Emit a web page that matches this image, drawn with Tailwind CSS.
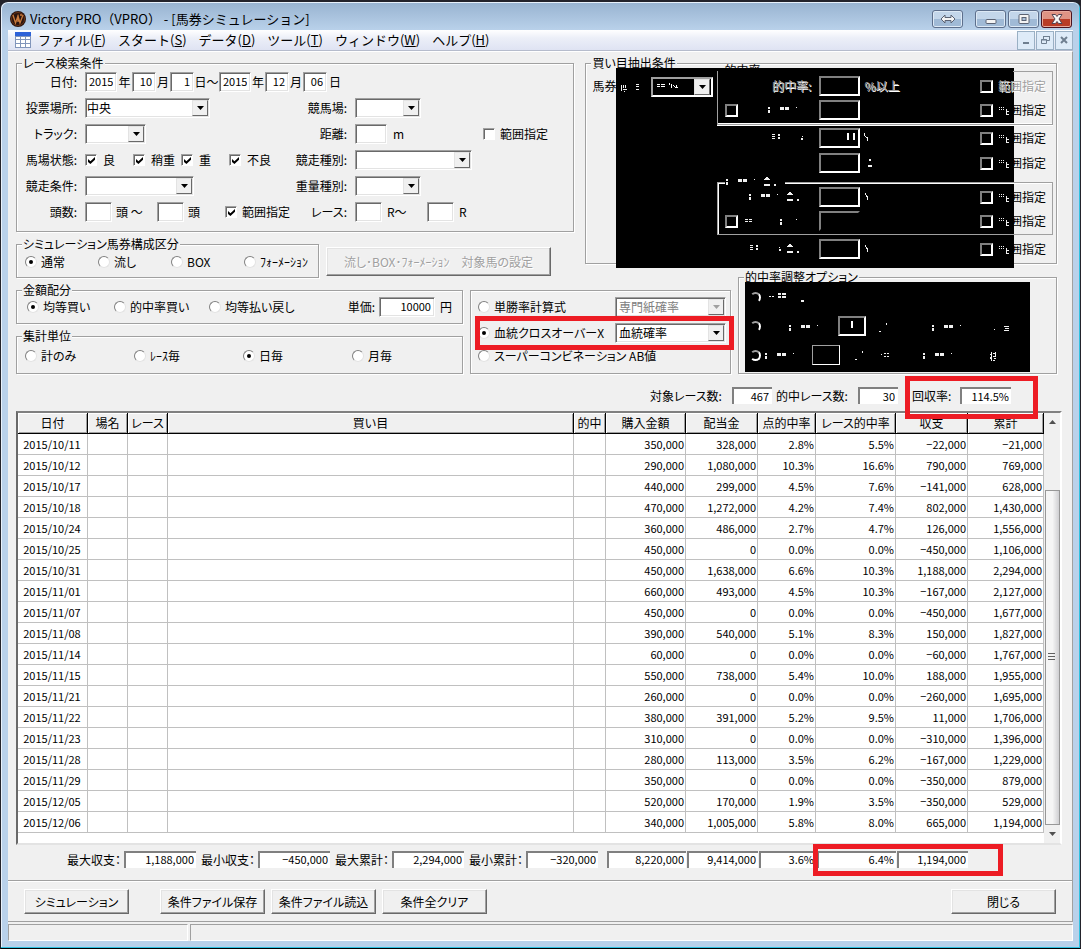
<!DOCTYPE html>
<html lang="ja">
  <head>
    <meta charset="UTF-8" />
    <meta name="viewport" content="width=device-width, initial-scale=1.0" />
    <script src="https://cdn.jsdelivr.net/npm/@tailwindcss/browser@4"></script>
    <title>Victory PRO（VPRO） - [馬券シミュレーション]</title>
  </head>
  <body
    class="bg-[#23232b] font-['Noto_Sans_CJK_JP',sans-serif] text-[12px] leading-3 text-black [font-feature-settings:'palt']"
  >
    <div
      class="flex min-h-screen flex-col rounded-t-lg border border-t-2 border-[#23232b] border-b-black bg-[#b9d1ea] px-[7px] pb-[7px] shadow-[inset_-1px_-1px_0_#2fc1e0,inset_1px_1px_0_#e8f1fb]"
    >
      <!-- title bar -->
      <header
        class="-mx-[6px] mt-px flex h-[27px] items-center rounded-t-md bg-linear-to-b from-[#99b4d1] to-[#b9d1ea] pr-[7px] pl-2"
      >
        <svg class="mt-1 size-4" viewBox="0 0 16 16">
          <circle cx="8" cy="8" r="8" fill="#2a1510" />
          <circle cx="8" cy="8" r="6.5" fill="none" stroke="#6b3416" />
          <path
            d="M3 4l2.500 8L8 5l2 7 3-8M8 4v7M10 4h2"
            fill="none"
            stroke="#c97a3c"
            stroke-width="1.300"
          />
        </svg>
        <h1 class="mt-1 ml-1 flex-1 text-[13px] leading-4 whitespace-pre [font-feature-settings:normal]">Victory PRO（VPRO） - [馬券シミュレーション]</h1>
        <div class="mt-1 flex gap-[2px]">
          <button
            aria-label="切替"
            class="mr-[10px] flex h-[18px] w-[31px] items-center justify-center rounded-[3px] border border-[#5d6f8c] bg-linear-to-b from-[#c3d6ea] from-50% to-[#a0bad6] to-50% shadow-[inset_0_0_0_1px_#dde9f5]"
          >
            <svg class="h-[10px] w-4" viewBox="0 0 16 10">
              <path
                d="M1 5l4-4v2.500h6V1l4 4-4 4V6.500H5V9z"
                fill="#f4f4f4"
                stroke="#5a6273"
              />
            </svg>
          </button>
          <button
            aria-label="最小化"
            class="flex h-[18px] w-[31px] items-center justify-center rounded-[3px] border border-[#5d6f8c] bg-linear-to-b from-[#c3d6ea] from-50% to-[#a0bad6] to-50% shadow-[inset_0_0_0_1px_#dde9f5]"
          >
            <svg class="h-[10px] w-3" viewBox="0 0 12 10">
              <rect x="1" y="5.500" width="10" height="4" rx="1" fill="#f4f4f4" stroke="#5a6273" />
            </svg>
          </button>
          <button
            aria-label="最大化"
            class="flex h-[18px] w-[31px] items-center justify-center rounded-[3px] border border-[#5d6f8c] bg-linear-to-b from-[#c3d6ea] from-50% to-[#a0bad6] to-50% shadow-[inset_0_0_0_1px_#dde9f5]"
          >
            <svg class="h-[10px] w-3" viewBox="0 0 12 10">
              <rect x="1" y=".5" width="10" height="9" rx="1" fill="#f4f4f4" stroke="#5a6273" />
              <rect x="4" y="3.500" width="4" height="3" fill="#a9c0da" stroke="#5a6273" />
            </svg>
          </button>
          <button
            aria-label="閉じる"
            class="flex h-[18px] w-[31px] items-center justify-center rounded-[3px] border border-[#4b1320] bg-linear-to-b from-[#df9384] from-50% to-[#b93c26] to-50% shadow-[inset_0_0_0_1px_#e8a99c]"
          >
            <svg class="h-[10px] w-3" viewBox="0 0 12 10">
              <path
                d="M1 .5h3.500l1.500 2 1.500-2H11L8 5l3 4.500H7.500L6 7.500l-1.500 2H1L4 5z"
                fill="#f6f6f6"
                stroke="#544552"
              />
            </svg>
          </button>
        </div>
      </header>

      <!-- menu bar -->
      <nav
        class="flex h-[21px] items-center border-b border-[#b6bccc] bg-linear-to-b from-white via-[#eceff8] via-40% to-[#dfe3f3] pl-[7px] text-[13px] leading-4 [font-feature-settings:normal]"
      >
        <svg class="mr-[7px] size-4" viewBox="0 0 16 16" shape-rendering="crispEdges">
          <rect width="16" height="16" fill="#8195bb" />
          <rect width="16" height="4" fill="#2d62d8" />
          <path
            d="M1 5h4v2H1zM6 5h4v2H6zM11 5h4v2h-4zM1 8h4v3H1zM6 8h4v3H6zM11 8h4v3h-4zM1 12h4v3H1zM6 12h4v3H6zM11 12h4v3h-4z"
            fill="#fff"
          />
        </svg>
        <div class="flex flex-1 gap-3">
          <button>ファイル(<u>F</u>)</button>
          <button>スタート(<u>S</u>)</button>
          <button>データ(<u>D</u>)</button>
          <button>ツール(<u>T</u>)</button>
          <button>ウィンドウ(<u>W</u>)</button>
          <button>ヘルプ(<u>H</u>)</button>
        </div>
        <div class="flex gap-px">
          <button
            aria-label="子ウィンドウを最小化"
            class="flex h-[19px] w-[18px] items-center justify-center border border-[#9ab0c4] bg-[#deebf8]"
          >
            <svg class="size-[10px]" viewBox="0 0 10 10"><path d="M2 7h6v2H2z" fill="#6f7f90" /></svg>
          </button>
          <button
            aria-label="子ウィンドウを元に戻す"
            class="flex h-[19px] w-[18px] items-center justify-center border border-[#9ab0c4] bg-[#deebf8]"
          >
            <svg class="size-[10px]" viewBox="0 0 10 10" fill="none" stroke="#6f7f90">
              <path d="M3.500 4V1.500h6v4H7M3 1.500h7" />
              <path d="M1.500 4.500h5v4h-5zM1 5h6" />
            </svg>
          </button>
          <button
            aria-label="子ウィンドウを閉じる"
            class="flex h-[19px] w-[18px] items-center justify-center border border-[#9ab0c4] bg-[#deebf8]"
          >
            <svg class="size-[10px]" viewBox="0 0 10 10">
              <path d="M2 2l6 6M8 2L2 8" stroke="#6f7f90" stroke-width="2" />
            </svg>
          </button>
        </div>
      </nav>

      <main
        class="flex flex-1 flex-col border-t border-r border-t-white border-r-[#a0a0a0] bg-[#f0f0f0] pt-[5px] pl-2"
      >
        <!-- search conditions / extraction conditions -->
        <div class="mr-[15px] grid grid-cols-[559fr_472fr] items-start gap-x-[11px]">
          <div>
            <fieldset
              class="border border-[#a0a0a0] shadow-[1px_1px_0_#fff,inset_1px_1px_0_#fff]"
            >
              <legend class="ml-[5px] bg-[#f0f0f0] px-px">レース検索条件</legend>
              <div class="grid grid-cols-[270px_1fr] gap-y-[6px] pt-[3px] pb-[9px]">
                <div class="col-span-2 flex h-5 items-center">
                  <span class="mr-2 w-[60px] text-right">日付:</span>
                  <input aria-label="開始年" value="2015" class="h-5 w-8 border border-[#a0a0a0] border-r-white border-b-white bg-white px-[3px] pb-[2px] text-right text-[11px] shadow-[inset_1px_1px_0_#696969,inset_-1px_-1px_0_#e3e3e3]" />
                  <span class="w-[15px] text-center">年</span>
                  <input aria-label="開始月" value="10" class="h-5 w-6 border border-[#a0a0a0] border-r-white border-b-white bg-white px-[3px] pb-[2px] text-right text-[11px] shadow-[inset_1px_1px_0_#696969,inset_-1px_-1px_0_#e3e3e3]" />
                  <span class="w-[14px] text-center">月</span>
                  <input aria-label="開始日" value="1" class="h-5 w-6 border border-[#a0a0a0] border-r-white border-b-white bg-white px-[3px] pb-[2px] text-right text-[11px] shadow-[inset_1px_1px_0_#696969,inset_-1px_-1px_0_#e3e3e3]" />
                  <span class="w-[25px] text-center whitespace-nowrap">日〜</span>
                  <input aria-label="終了年" value="2015" class="h-5 w-8 border border-[#a0a0a0] border-r-white border-b-white bg-white px-[3px] pb-[2px] text-right text-[11px] shadow-[inset_1px_1px_0_#696969,inset_-1px_-1px_0_#e3e3e3]" />
                  <span class="w-[14px] text-center">年</span>
                  <input aria-label="終了月" value="12" class="h-5 w-6 border border-[#a0a0a0] border-r-white border-b-white bg-white px-[3px] pb-[2px] text-right text-[11px] shadow-[inset_1px_1px_0_#696969,inset_-1px_-1px_0_#e3e3e3]" />
                  <span class="w-[14px] text-center">月</span>
                  <input aria-label="終了日" value="06" class="h-5 w-6 border border-[#a0a0a0] border-r-white border-b-white bg-white px-[3px] pb-[2px] text-right text-[11px] shadow-[inset_1px_1px_0_#696969,inset_-1px_-1px_0_#e3e3e3]" />
                  <span class="ml-[2px]">日</span>
                </div>

                <div class="flex h-5 items-center">
                  <label for="place" class="mr-2 w-[60px] text-right">投票場所:</label>
                  <div class="relative h-5 w-[125px]">
                    <select id="place" class="size-full appearance-none border border-[#a0a0a0] border-r-white border-b-white bg-white pl-px shadow-[inset_1px_1px_0_#696969,inset_-1px_-1px_0_#e3e3e3]">
                      <option>中央</option>
                      <option>地方</option>
                    </select>
                    <span class="pointer-events-none absolute inset-y-[2px] right-[2px] flex w-4 items-center justify-center border border-[#e3e3e3] border-r-[#696969] border-b-[#696969] bg-[#f0f0f0]">
                      <svg class="h-1 w-[7px]" viewBox="0 0 7 4"><path d="M0 0h7L3.500 4z" /></svg>
                    </span>
                  </div>
                </div>
                <div class="flex h-5 items-center">
                  <label for="course" class="mr-2 w-[60px] text-right">競馬場:</label>
                  <div class="relative h-5 w-[66px]">
                    <select id="course" class="size-full appearance-none border border-[#a0a0a0] border-r-white border-b-white bg-white pl-px shadow-[inset_1px_1px_0_#696969,inset_-1px_-1px_0_#e3e3e3]">
                      <option></option>
                    </select>
                    <span class="pointer-events-none absolute inset-y-[2px] right-[2px] flex w-4 items-center justify-center border border-[#e3e3e3] border-r-[#696969] border-b-[#696969] bg-[#f0f0f0]">
                      <svg class="h-1 w-[7px]" viewBox="0 0 7 4"><path d="M0 0h7L3.500 4z" /></svg>
                    </span>
                  </div>
                </div>

                <div class="flex h-5 items-center">
                  <label for="track" class="mr-2 w-[60px] text-right">トラック:</label>
                  <div class="relative h-5 w-[61px]">
                    <select id="track" class="size-full appearance-none border border-[#a0a0a0] border-r-white border-b-white bg-white pl-px shadow-[inset_1px_1px_0_#696969,inset_-1px_-1px_0_#e3e3e3]">
                      <option></option>
                    </select>
                    <span class="pointer-events-none absolute inset-y-[2px] right-[2px] flex w-4 items-center justify-center border border-[#e3e3e3] border-r-[#696969] border-b-[#696969] bg-[#f0f0f0]">
                      <svg class="h-1 w-[7px]" viewBox="0 0 7 4"><path d="M0 0h7L3.500 4z" /></svg>
                    </span>
                  </div>
                </div>
                <div class="flex h-5 items-center">
                  <label for="distance" class="mr-2 w-[60px] text-right">距離:</label>
                  <input id="distance" class="h-5 w-8 border border-[#a0a0a0] border-r-white border-b-white bg-white px-[3px] text-right text-[11px] shadow-[inset_1px_1px_0_#696969,inset_-1px_-1px_0_#e3e3e3]" />
                  <span class="ml-[6px] w-[90px]">m</span>
                  <label class="flex items-center gap-[5px]">
                    <input type="checkbox" class="size-3 appearance-none border border-[#a0a0a0] border-r-white border-b-white bg-white shadow-[inset_1px_1px_0_#696969]" />
                    範囲指定
                  </label>
                </div>

                <div class="flex h-5 items-center">
                  <span class="mr-2 w-[60px] text-right">馬場状態:</span>
                  <label class="flex w-12 items-center gap-[6px]">
                    <input type="checkbox" checked class="size-3 appearance-none border border-[#a0a0a0] border-r-white border-b-white bg-white p-[2px] shadow-[inset_1px_1px_0_#696969] checked:before:block checked:before:size-[7px] checked:before:bg-black checked:before:[clip-path:polygon(0_30%,35%_60%,100%_0,100%_40%,35%_100%,0_70%)]" />良
                  </label>
                  <label class="flex w-12 items-center gap-[6px]">
                    <input type="checkbox" checked class="size-3 appearance-none border border-[#a0a0a0] border-r-white border-b-white bg-white p-[2px] shadow-[inset_1px_1px_0_#696969] checked:before:block checked:before:size-[7px] checked:before:bg-black checked:before:[clip-path:polygon(0_30%,35%_60%,100%_0,100%_40%,35%_100%,0_70%)]" />稍重
                  </label>
                  <label class="flex w-12 items-center gap-[6px]">
                    <input type="checkbox" checked class="size-3 appearance-none border border-[#a0a0a0] border-r-white border-b-white bg-white p-[2px] shadow-[inset_1px_1px_0_#696969] checked:before:block checked:before:size-[7px] checked:before:bg-black checked:before:[clip-path:polygon(0_30%,35%_60%,100%_0,100%_40%,35%_100%,0_70%)]" />重
                  </label>
                  <label class="flex items-center gap-[6px]">
                    <input type="checkbox" checked class="size-3 appearance-none border border-[#a0a0a0] border-r-white border-b-white bg-white p-[2px] shadow-[inset_1px_1px_0_#696969] checked:before:block checked:before:size-[7px] checked:before:bg-black checked:before:[clip-path:polygon(0_30%,35%_60%,100%_0,100%_40%,35%_100%,0_70%)]" />不良
                  </label>
                </div>
                <div class="flex h-5 items-center">
                  <label for="kind" class="mr-2 w-[60px] text-right">競走種別:</label>
                  <div class="relative h-5 w-[117px]">
                    <select id="kind" class="size-full appearance-none border border-[#a0a0a0] border-r-white border-b-white bg-white pl-px shadow-[inset_1px_1px_0_#696969,inset_-1px_-1px_0_#e3e3e3]">
                      <option></option>
                    </select>
                    <span class="pointer-events-none absolute inset-y-[2px] right-[2px] flex w-4 items-center justify-center border border-[#e3e3e3] border-r-[#696969] border-b-[#696969] bg-[#f0f0f0]">
                      <svg class="h-1 w-[7px]" viewBox="0 0 7 4"><path d="M0 0h7L3.500 4z" /></svg>
                    </span>
                  </div>
                </div>

                <div class="flex h-5 items-center">
                  <label for="cond" class="mr-2 w-[60px] text-right">競走条件:</label>
                  <div class="relative h-5 w-[109px]">
                    <select id="cond" class="size-full appearance-none border border-[#a0a0a0] border-r-white border-b-white bg-white pl-px shadow-[inset_1px_1px_0_#696969,inset_-1px_-1px_0_#e3e3e3]">
                      <option></option>
                    </select>
                    <span class="pointer-events-none absolute inset-y-[2px] right-[2px] flex w-4 items-center justify-center border border-[#e3e3e3] border-r-[#696969] border-b-[#696969] bg-[#f0f0f0]">
                      <svg class="h-1 w-[7px]" viewBox="0 0 7 4"><path d="M0 0h7L3.500 4z" /></svg>
                    </span>
                  </div>
                </div>
                <div class="flex h-5 items-center">
                  <label for="weight" class="mr-2 w-[60px] text-right">重量種別:</label>
                  <div class="relative h-5 w-[66px]">
                    <select id="weight" class="size-full appearance-none border border-[#a0a0a0] border-r-white border-b-white bg-white pl-px shadow-[inset_1px_1px_0_#696969,inset_-1px_-1px_0_#e3e3e3]">
                      <option></option>
                    </select>
                    <span class="pointer-events-none absolute inset-y-[2px] right-[2px] flex w-4 items-center justify-center border border-[#e3e3e3] border-r-[#696969] border-b-[#696969] bg-[#f0f0f0]">
                      <svg class="h-1 w-[7px]" viewBox="0 0 7 4"><path d="M0 0h7L3.500 4z" /></svg>
                    </span>
                  </div>
                </div>

                <div class="flex h-5 items-center *:shrink-0">
                  <label for="headFrom" class="mr-2 w-[60px] text-right">頭数:</label>
                  <input id="headFrom" class="h-5 w-[27px] border border-[#a0a0a0] border-r-white border-b-white bg-white px-[3px] text-right text-[11px] shadow-[inset_1px_1px_0_#696969,inset_-1px_-1px_0_#e3e3e3]" />
                  <span class="w-[45px] pl-1">頭 〜</span>
                  <input aria-label="頭数上限" class="h-5 w-[27px] border border-[#a0a0a0] border-r-white border-b-white bg-white px-[3px] text-right text-[11px] shadow-[inset_1px_1px_0_#696969,inset_-1px_-1px_0_#e3e3e3]" />
                  <span class="w-[41px] pl-1">頭</span>
                  <label class="flex items-center gap-[5px] whitespace-nowrap">
                    <input type="checkbox" checked class="size-3 appearance-none border border-[#a0a0a0] border-r-white border-b-white bg-white p-[2px] shadow-[inset_1px_1px_0_#696969] checked:before:block checked:before:size-[7px] checked:before:bg-black checked:before:[clip-path:polygon(0_30%,35%_60%,100%_0,100%_40%,35%_100%,0_70%)]" />範囲指定
                  </label>
                </div>
                <div class="flex h-5 items-center">
                  <label for="raceFrom" class="mr-2 w-[60px] text-right">レース:</label>
                  <input id="raceFrom" class="h-5 w-[27px] border border-[#a0a0a0] border-r-white border-b-white bg-white px-[3px] text-right text-[11px] shadow-[inset_1px_1px_0_#696969,inset_-1px_-1px_0_#e3e3e3]" />
                  <span class="w-[45px] pl-[5px]">R〜</span>
                  <input aria-label="レース上限" class="h-5 w-[27px] border border-[#a0a0a0] border-r-white border-b-white bg-white px-[3px] text-right text-[11px] shadow-[inset_1px_1px_0_#696969,inset_-1px_-1px_0_#e3e3e3]" />
                  <span class="pl-[5px]">R</span>
                </div>
              </div>
            </fieldset>

            <div class="mt-[6px] flex">
              <fieldset
                class="w-[303px] border border-[#a0a0a0] shadow-[1px_1px_0_#fff,inset_1px_1px_0_#fff]"
              >
                <legend class="ml-[5px] bg-[#f0f0f0] px-px">シミュレーション馬券構成区分</legend>
                <div class="flex h-[27px] items-center pb-1 pl-2">
                  <label class="flex w-[73px] items-center gap-1 whitespace-nowrap">
                    <input type="radio" name="form" checked class="size-3 appearance-none rounded-full border border-[#808080] border-r-[#e3e3e3] border-b-[#e3e3e3] bg-white p-[3px] checked:before:block checked:before:size-1 checked:before:rounded-full checked:before:bg-black" />通常
                  </label>
                  <label class="flex w-[73px] items-center gap-1 whitespace-nowrap">
                    <input type="radio" name="form" class="size-3 appearance-none rounded-full border border-[#808080] border-r-[#e3e3e3] border-b-[#e3e3e3] bg-white p-[3px] checked:before:block checked:before:size-1 checked:before:rounded-full checked:before:bg-black" />流し
                  </label>
                  <label class="flex w-[73px] items-center gap-1 whitespace-nowrap">
                    <input type="radio" name="form" class="size-3 appearance-none rounded-full border border-[#808080] border-r-[#e3e3e3] border-b-[#e3e3e3] bg-white p-[3px] checked:before:block checked:before:size-1 checked:before:rounded-full checked:before:bg-black" />BOX
                  </label>
                  <label class="flex items-center gap-1 whitespace-nowrap [font-feature-settings:normal]">
                    <input type="radio" name="form" class="size-3 appearance-none rounded-full border border-[#808080] border-r-[#e3e3e3] border-b-[#e3e3e3] bg-white p-[3px] checked:before:block checked:before:size-1 checked:before:rounded-full checked:before:bg-black" />ﾌｫｰﾒｰｼｮﾝ
                  </label>
                </div>
              </fieldset>
              <button
                disabled
                class="mt-[9px] ml-[7px] h-[29px] w-[225px] border border-white border-r-[#696969] border-b-[#696969] bg-[#f0f0f0] whitespace-nowrap text-[#a0a0a0] shadow-[inset_-1px_-1px_0_#a0a0a0,inset_1px_1px_0_#e3e3e3] text-shadow-[1px_1px_0_#fff]"
              >
                流し･BOX･ﾌｫｰﾒｰｼｮﾝ　対象馬の設定
              </button>
            </div>
          </div>

          <fieldset
            class="border border-[#a0a0a0] shadow-[1px_1px_0_#fff,inset_1px_1px_0_#fff]"
          >
            <legend class="ml-[5px] bg-[#f0f0f0] px-px">買い目抽出条件</legend>
            <div class="relative">
              <span class="absolute -top-[5px] left-[138px]">的中率</span>
              <div class="absolute -top-px right-[42px] -bottom-[5px] left-[30px] bg-black"></div>
              <div class="relative flex items-start pr-[3px] pb-1">
                <span class="mt-[11px] ml-[6px] w-6 whitespace-nowrap">馬券</span>
                <svg class="mt-2 h-5 w-[35px]" viewBox="0 0 35 20" fill="#f0f0f0" shape-rendering="crispEdges">
                  <path d="M5 8h1v6h-1zM7 8h1v3h-1zM9 8h1v3h-1zM7 12h4v1h-4zM8 14h1v1h-1zM20 7h3v1h-3zM20 9h3v1h-3zM20 12h3v1h-3z" />
                </svg>
                <div class="relative mt-2 h-5 w-[62px]">
                  <select aria-label="馬券種" class="size-full appearance-none border-2 border-[#a0a0a0] border-r-white border-b-white bg-black">
                    <option></option>
                  </select>
                  <svg class="pointer-events-none absolute top-[6px] left-[6px] h-[6px] w-6" viewBox="0 0 24 6" fill="#fff" shape-rendering="crispEdges">
                    <path d="M0 1h3v1H0zM4 1h4v1H4zM0 3h3v1H0zM4 3h4v1H4zM12 0h1v2h-1zM14 1h1v4h-1zM16 2h1v1h-1zM17 3h1v1h-1zM18 4h1v1h-1zM19 2h1v3h-1zM20 4h1v1h-1z" />
                  </svg>
                  <span class="pointer-events-none absolute inset-y-[2px] right-[3px] flex w-4 items-center justify-center border border-[#e3e3e3] border-r-[#696969] border-b-[#696969] bg-[#f0f0f0]">
                    <svg class="h-1 w-[7px]" viewBox="0 0 7 4"><path d="M0 0h7L3.500 4z" /></svg>
                  </span>
                </div>

                <div class="mt-[2px] ml-1 flex-1">
                  <div class="relative border border-t-0 border-[#a0a0a0] pt-[5px] pb-1 shadow-[0_1px_0_#fff,inset_0_-1px_0_#fff]">
                    <div class="absolute top-0 right-0 h-px w-[39px] bg-[#a0a0a0]"></div>
                    <div class="flex h-5 items-center">
                      <span class="w-[101px] pr-2 text-right text-[#a0a0a0] text-shadow-[1px_1px_0_#fff]">的中率:</span>
                      <input aria-label="的中率" class="h-5 w-[41px] border-2 border-[#808080] border-r-white border-b-white bg-black" />
                      <span class="flex-1 pl-1 text-[#a0a0a0] text-shadow-[1px_1px_0_#fff]">%以上</span>
                      <label class="mr-[6px] flex items-center gap-[5px] text-[#a0a0a0] text-shadow-[1px_1px_0_#fff]">
                        <input type="checkbox" disabled class="size-[13px] appearance-none border-2 border-[#808080] border-r-white border-b-white bg-black" />範囲指定
                      </label>
                    </div>
                    <div class="mt-1 flex h-5 items-center">
                      <input type="checkbox" aria-label="条件1" class="ml-[7px] size-[13px] appearance-none border-2 border-[#808080] border-r-white border-b-white bg-black" />
                      <svg class="h-5 w-[81px]" viewBox="0 0 81 20" fill="#f0f0f0" shape-rendering="crispEdges">
                        <path d="M30 7h2v2h-2zM30 10h2v3h-2zM42 7h4v3h-4zM47 7h4v3h-4zM58 7h1v1h-1z" />
                      </svg>
                      <input aria-label="値1" class="h-5 w-[41px] border-2 border-[#808080] border-r-white border-b-white bg-black" />
                      <span class="flex-1"></span>
                      <label class="relative mr-[6px] flex items-center gap-[5px]">
                        <input type="checkbox" class="size-[13px] appearance-none border-2 border-[#808080] border-r-white border-b-white bg-black" />範囲指定
                        <svg class="absolute left-[19px] h-[9px] w-[10px]" viewBox="0 0 10 9" fill="#f0f0f0" shape-rendering="crispEdges">
                          <path d="M0 1h1v1H0zM2 1h1v1H2zM4 1h1v1H4zM0 3h1v1H0zM2 3h1v1H2zM4 3h1v1H4zM7 3h1v6H7zM8 5h2v1H8zM8 8h2v1H8z" />
                        </svg>
                      </label>
                    </div>
                  </div>

                  <div class="mt-[3px] flex h-5 items-center pr-px pl-px">
                    <svg class="h-5 w-[101px]" viewBox="0 0 101 20" fill="#f0f0f0" shape-rendering="crispEdges">
                      <path d="M54 6h3v1h-3zM54 8h3v1h-3zM54 10h3v1h-3zM60 6h2v2h-2zM60 9h2v2h-2zM84 8h1v1h-1zM83 10h2v2h-2z" />
                    </svg>
                    <div class="relative h-5 w-[41px]">
                      <input aria-label="値2" class="size-full border-2 border-[#808080] border-r-white border-b-white bg-black" />
                      <svg class="pointer-events-none absolute top-[5px] right-[5px] h-[7px] w-2" viewBox="0 0 8 7" fill="#fff" shape-rendering="crispEdges"><path d="M0 0h2v7H0zM6 0h2v7H6z" /></svg>
                    </div>
                    <svg class="h-5 w-3" viewBox="0 0 12 20" fill="#f0f0f0" shape-rendering="crispEdges"><path d="M4 5h1v3H4zM5 8h1v1H5zM6 9h1v1H6zM7 9h1v4H7z" /></svg>
                    <span class="flex-1"></span>
                    <label class="relative mr-[6px] flex items-center gap-[5px]">
                      <input type="checkbox" class="size-[13px] appearance-none border-2 border-[#808080] border-r-white border-b-white bg-black" />範囲指定
                      <svg class="absolute left-[19px] h-[9px] w-[10px]" viewBox="0 0 10 9" fill="#f0f0f0" shape-rendering="crispEdges">
                        <path d="M0 1h1v1H0zM2 1h1v1H2zM4 1h1v1H4zM0 3h1v1H0zM2 3h1v1H2zM4 3h1v1H4zM7 3h1v6H7zM8 5h2v1H8zM8 8h2v1H8z" />
                      </svg>
                    </label>
                  </div>
                  <div class="mt-[5px] flex h-5 items-center pr-px pl-[102px]">
                    <input aria-label="値3" class="h-5 w-[41px] border-2 border-[#808080] border-r-white border-b-white bg-black" />
                    <svg class="h-5 w-[14px]" viewBox="0 0 14 20" fill="#f0f0f0" shape-rendering="crispEdges"><path d="M9 6h2v2H9zM8 12h4v2H8z" /></svg>
                    <span class="flex-1"></span>
                    <label class="relative mr-[6px] flex items-center gap-[5px]">
                      <input type="checkbox" class="size-[13px] appearance-none border-2 border-[#808080] border-r-white border-b-white bg-black" />範囲指定
                      <svg class="absolute left-[19px] h-[9px] w-[10px]" viewBox="0 0 10 9" fill="#f0f0f0" shape-rendering="crispEdges">
                        <path d="M0 1h1v1H0zM2 1h1v1H2zM4 1h1v1H4zM0 3h1v1H0zM2 3h1v1H2zM4 3h1v1H4zM7 3h1v6H7zM8 5h2v1H8zM8 8h2v1H8z" />
                      </svg>
                    </label>
                  </div>

                  <fieldset class="mt-[3px] border border-[#a0a0a0] pb-[3px] shadow-[inset_1px_1px_0_#fff]">
                    <legend class="ml-[7px] bg-black">
                      <svg class="h-3 w-[60px]" viewBox="0 0 60 12" fill="#f0f0f0" shape-rendering="crispEdges">
                        <path d="M1 3h2v2H1zM1 6h2v3H1zM13 3h4v3h-4zM18 3h4v3h-4zM29 3h1v1h-1zM41 1h2v1h-2zM40 2h4v1h-4zM39 3h6v1h-6zM39 8h6v2h-6zM49 8h2v2h-2z" />
                      </svg>
                    </legend>
                    <div class="-mt-px flex h-5 items-center">
                      <svg class="h-5 w-[101px]" viewBox="0 0 101 20" fill="#f0f0f0" shape-rendering="crispEdges">
                        <path d="M31 7h2v2h-2zM31 10h2v3h-2zM43 7h4v3h-4zM48 7h4v3h-4zM59 7h1v1h-1zM71 5h2v1h-2zM70 6h4v1h-4zM69 7h6v1h-6zM69 12h6v2h-6zM79 12h2v2h-2z" />
                      </svg>
                      <input aria-label="値4" class="h-5 w-[41px] border-2 border-[#808080] border-r-white border-b-white bg-black" />
                      <svg class="h-5 w-3" viewBox="0 0 12 20" fill="#f0f0f0" shape-rendering="crispEdges"><path d="M5 6h1v2H5zM6 8h1v2H6zM7 9h1v4H7z" /></svg>
                      <span class="flex-1"></span>
                      <label class="relative mr-[6px] flex items-center gap-[5px]">
                        <input type="checkbox" class="size-[13px] appearance-none border-2 border-[#808080] border-r-white border-b-white bg-black" />範囲指定
                        <svg class="absolute left-[19px] h-[9px] w-[10px]" viewBox="0 0 10 9" fill="#f0f0f0" shape-rendering="crispEdges">
                          <path d="M0 1h1v1H0zM2 1h1v1H2zM4 1h1v1H4zM0 3h1v1H0zM2 3h1v1H2zM4 3h1v1H4zM7 3h1v6H7zM8 5h2v1H8zM8 8h2v1H8z" />
                        </svg>
                      </label>
                    </div>
                    <div class="mt-1 flex h-5 items-center">
                      <input type="checkbox" aria-label="条件2" class="ml-[7px] size-[13px] appearance-none border-2 border-[#808080] border-r-white border-b-white bg-black" />
                      <svg class="h-5 w-[81px]" viewBox="0 0 81 20" fill="#f0f0f0" shape-rendering="crispEdges">
                        <path d="M7 8h3v1H7zM11 8h3v1h-3zM7 10h3v1H7zM11 10h3v1h-3zM42 8h2v2h-2zM42 11h2v3h-2zM58 8h1v1h-1z" />
                      </svg>
                      <input aria-label="値5" class="h-5 w-[41px] border-2 border-[#808080] border-r-black border-b-black bg-black" />
                      <span class="flex-1"></span>
                      <label class="relative mr-[6px] flex items-center gap-[5px]">
                        <input type="checkbox" class="size-[13px] appearance-none border-2 border-[#808080] border-r-white border-b-white bg-black" />範囲指定
                        <svg class="absolute left-[19px] h-[9px] w-[10px]" viewBox="0 0 10 9" fill="#f0f0f0" shape-rendering="crispEdges">
                          <path d="M0 1h1v1H0zM2 1h1v1H2zM4 1h1v1H4zM0 3h1v1H0zM2 3h1v1H2zM4 3h1v1H4zM7 3h1v6H7zM8 5h2v1H8zM8 8h2v1H8z" />
                        </svg>
                      </label>
                    </div>
                  </fieldset>

                  <div class="mt-1 flex h-5 items-center pr-px pl-px">
                    <svg class="h-5 w-[101px]" viewBox="0 0 101 20" fill="#f0f0f0" shape-rendering="crispEdges">
                      <path d="M32 6h3v1h-3zM32 8h3v1h-3zM32 10h3v1h-3zM38 6h2v2h-2zM38 9h2v2h-2zM61 8h1v1h-1zM61 10h2v2h-2zM71 5h2v1h-2zM70 6h4v1h-4zM69 7h6v1h-6zM69 12h6v2h-6zM79 12h2v2h-2z" />
                    </svg>
                    <input aria-label="値6" class="h-5 w-[41px] border-2 border-[#808080] border-r-white border-b-white bg-black" />
                    <svg class="h-5 w-3" viewBox="0 0 12 20" fill="#f0f0f0" shape-rendering="crispEdges"><path d="M5 6h1v2H5zM6 8h1v2H6zM7 9h1v4H7z" /></svg>
                    <span class="flex-1"></span>
                    <label class="relative mr-[6px] flex items-center gap-[5px]">
                      <input type="checkbox" class="size-[13px] appearance-none border-2 border-[#808080] border-r-white border-b-white bg-black" />範囲指定
                      <svg class="absolute left-[19px] h-[9px] w-[10px]" viewBox="0 0 10 9" fill="#f0f0f0" shape-rendering="crispEdges">
                        <path d="M0 1h1v1H0zM2 1h1v1H2zM4 1h1v1H4zM0 3h1v1H0zM2 3h1v1H2zM4 3h1v1H4zM7 3h1v6H7zM8 5h2v1H8zM8 8h2v1H8z" />
                      </svg>
                    </label>
                  </div>
                </div>
              </div>
            </div>
          </fieldset>
        </div>

        <!-- stake, unit, formula, hit rate options -->
        <div class="-mt-[7px] mr-[15px] grid grid-cols-[447fr_261fr_319fr] items-end gap-x-[7px]">
          <div>
            <fieldset class="border border-[#a0a0a0] shadow-[1px_1px_0_#fff,inset_1px_1px_0_#fff]">
              <legend class="ml-[5px] bg-[#f0f0f0] px-px">金額配分</legend>
              <div class="mt-px mb-[6px] flex h-5 items-center pl-[10px]">
                <label class="flex w-[87px] items-center gap-1 whitespace-nowrap">
                  <input type="radio" name="stake" checked class="size-3 appearance-none rounded-full border border-[#808080] border-r-[#e3e3e3] border-b-[#e3e3e3] bg-white p-[3px] checked:before:block checked:before:size-1 checked:before:rounded-full checked:before:bg-black" />均等買い
                </label>
                <label class="flex w-[95px] items-center gap-1 whitespace-nowrap">
                  <input type="radio" name="stake" class="size-3 appearance-none rounded-full border border-[#808080] border-r-[#e3e3e3] border-b-[#e3e3e3] bg-white p-[3px] checked:before:block checked:before:size-1 checked:before:rounded-full checked:before:bg-black" />的中率買い
                </label>
                <label class="flex flex-1 items-center gap-1 whitespace-nowrap">
                  <input type="radio" name="stake" class="size-3 appearance-none rounded-full border border-[#808080] border-r-[#e3e3e3] border-b-[#e3e3e3] bg-white p-[3px] checked:before:block checked:before:size-1 checked:before:rounded-full checked:before:bg-black" />均等払い戻し
                </label>
                <label for="unit" class="mr-1">単価:</label>
                <input id="unit" value="10000" class="h-5 w-14 border border-[#a0a0a0] border-r-white border-b-white bg-white px-[3px] pb-[2px] text-right text-[11px] shadow-[inset_1px_1px_0_#696969,inset_-1px_-1px_0_#e3e3e3]" />
                <span class="mr-[10px] ml-[5px]">円</span>
              </div>
            </fieldset>
            <fieldset class="mt-[6px] border border-[#a0a0a0] shadow-[1px_1px_0_#fff,inset_1px_1px_0_#fff]">
              <legend class="ml-[5px] bg-[#f0f0f0] px-px">集計単位</legend>
              <div class="mt-1 mb-[7px] flex h-5 items-center pl-2">
                <label class="flex w-[109px] items-center gap-1">
                  <input type="radio" name="sum" class="size-3 appearance-none rounded-full border border-[#808080] border-r-[#e3e3e3] border-b-[#e3e3e3] bg-white p-[3px] checked:before:block checked:before:size-1 checked:before:rounded-full checked:before:bg-black" />計のみ
                </label>
                <label class="flex w-[109px] items-center gap-1 [font-feature-settings:normal]">
                  <input type="radio" name="sum" class="size-3 appearance-none rounded-full border border-[#808080] border-r-[#e3e3e3] border-b-[#e3e3e3] bg-white p-[3px] checked:before:block checked:before:size-1 checked:before:rounded-full checked:before:bg-black" />ﾚｰｽ毎
                </label>
                <label class="flex w-[109px] items-center gap-1">
                  <input type="radio" name="sum" checked class="size-3 appearance-none rounded-full border border-[#808080] border-r-[#e3e3e3] border-b-[#e3e3e3] bg-white p-[3px] checked:before:block checked:before:size-1 checked:before:rounded-full checked:before:bg-black" />日毎
                </label>
                <label class="flex items-center gap-1">
                  <input type="radio" name="sum" class="size-3 appearance-none rounded-full border border-[#808080] border-r-[#e3e3e3] border-b-[#e3e3e3] bg-white p-[3px] checked:before:block checked:before:size-1 checked:before:rounded-full checked:before:bg-black" />月毎
                </label>
              </div>
            </fieldset>
          </div>

          <div class="border border-[#a0a0a0] pt-[6px] pr-1 pb-[7px] pl-[7px] shadow-[1px_1px_0_#fff,inset_1px_1px_0_#fff]">
            <div class="flex h-5 items-center">
              <label class="flex flex-1 items-center gap-1 whitespace-nowrap">
                <input type="radio" name="formula" class="size-3 appearance-none rounded-full border border-[#808080] border-r-[#e3e3e3] border-b-[#e3e3e3] bg-white p-[3px] checked:before:block checked:before:size-1 checked:before:rounded-full checked:before:bg-black" />単勝率計算式
              </label>
              <div class="relative h-5 w-[111px]">
                <select aria-label="単勝率" disabled class="size-full appearance-none border border-[#a0a0a0] border-r-white border-b-white bg-white pl-[3px] text-[#808080] opacity-100 shadow-[inset_1px_1px_0_#696969,inset_-1px_-1px_0_#e3e3e3]">
                  <option>専門紙確率</option>
                </select>
                <span class="pointer-events-none absolute inset-y-[2px] right-[2px] flex w-4 items-center justify-center border border-[#e3e3e3] border-r-[#696969] border-b-[#696969] bg-[#f0f0f0]">
                  <svg class="h-1 w-[7px]" viewBox="0 0 7 4"><path d="M0 0h7L3.500 4z" fill="#a0a0a0" /></svg>
                </span>
              </div>
            </div>
            <div class="relative mt-[6px] flex h-5 items-center">
              <label class="flex flex-1 items-center gap-1 whitespace-nowrap">
                <input type="radio" name="formula" checked class="size-3 appearance-none rounded-full border border-[#808080] border-r-[#e3e3e3] border-b-[#e3e3e3] bg-white p-[3px] checked:before:block checked:before:size-1 checked:before:rounded-full checked:before:bg-black" />血統クロスオーバーX
              </label>
              <div class="relative h-5 w-[111px]">
                <select aria-label="血統" class="size-full appearance-none border border-[#a0a0a0] border-r-white border-b-white bg-white pl-[3px] shadow-[inset_1px_1px_0_#696969,inset_-1px_-1px_0_#e3e3e3]">
                  <option>血統確率</option>
                </select>
                <span class="pointer-events-none absolute inset-y-[2px] right-[2px] flex w-4 items-center justify-center border border-[#e3e3e3] border-r-[#696969] border-b-[#696969] bg-[#f0f0f0]">
                  <svg class="h-1 w-[7px]" viewBox="0 0 7 4"><path d="M0 0h7L3.500 4z" /></svg>
                </span>
              </div>
              <div class="pointer-events-none absolute -top-[7px] -right-2 -bottom-[7px] -left-[3px] z-10 border-5 border-[#ed1c24]"></div>
            </div>
            <label class="mt-[3px] flex h-5 items-center gap-1 whitespace-nowrap">
              <input type="radio" name="formula" class="size-3 appearance-none rounded-full border border-[#808080] border-r-[#e3e3e3] border-b-[#e3e3e3] bg-white p-[3px] checked:before:block checked:before:size-1 checked:before:rounded-full checked:before:bg-black" />スーパーコンビネーション AB値
            </label>
          </div>

          <fieldset class="border border-[#a0a0a0] pb-px shadow-[1px_1px_0_#fff,inset_1px_1px_0_#fff]">
            <legend class="ml-[5px] bg-[#f0f0f0] px-px">的中率調整オプション</legend>
            <div class="-mt-px mr-[26px] ml-[6px] bg-black pt-[5px] pb-[7px] pl-[5px]">
              <div class="flex h-5 items-center">
                <input type="radio" name="option" aria-label="調整なし" class="size-[11px] appearance-none rounded-full border-2 border-[#a0a0a0] border-r-white border-b-transparent border-l-transparent" />
                <svg class="h-5 w-[60px]" viewBox="0 0 60 20" fill="#f0f0f0" shape-rendering="crispEdges">
                  <path d="M8 9h2v1H8zM11 9h2v1h-2zM17 6h3v2h-3zM21 6h4v2h-4zM17 9h3v2h-3zM21 9h4v2h-4zM40 13h3v2h-3z" />
                </svg>
              </div>
              <div class="mt-[9px] flex h-5 items-center">
                <input type="radio" name="option" aria-label="調整1" class="size-[11px] appearance-none rounded-full border-2 border-[#a0a0a0] border-r-white border-b-transparent border-l-transparent" />
                <svg class="h-5 w-[77px]" viewBox="0 0 77 20" fill="#f0f0f0" shape-rendering="crispEdges">
                  <path d="M28 9h2v2h-2zM28 12h2v3h-2zM40 9h4v3h-4zM45 9h4v3h-4zM56 9h1v1h-1z" />
                </svg>
                <div class="relative h-5 w-7">
                  <input aria-label="調整値1" class="size-full border-2 border-[#808080] border-r-white border-b-white bg-black" />
                  <svg class="pointer-events-none absolute top-[5px] left-[13px] h-[7px] w-[2px]" viewBox="0 0 2 7"><path d="M0 0h2v7H0z" fill="#fff" /></svg>
                </div>
                <svg class="h-5 w-[150px]" viewBox="0 0 150 20" fill="#f0f0f0" shape-rendering="crispEdges">
                  <path d="M13 15h2v1h-2zM20 7h1v2h-1zM66 9h2v2h-2zM66 12h2v3h-2zM78 9h4v3h-4zM83 9h4v3h-4zM94 9h1v1h-1zM128 13h1v1h-1zM138 10h5v1h-5zM139 12h4v1h-4zM138 14h5v1h-5z" />
                </svg>
              </div>
              <div class="mt-[9px] flex h-5 items-center">
                <input type="radio" name="option" aria-label="調整2" class="size-[11px] appearance-none rounded-full border-2 border-[#a0a0a0] border-r-white border-b-white border-l-transparent" />
                <svg class="h-5 w-[51px]" viewBox="0 0 51 20" fill="#f0f0f0" shape-rendering="crispEdges">
                  <path d="M4 8h2v2H4zM4 11h2v3H4zM16 8h4v3h-4zM21 8h4v3h-4zM32 8h1v1h-1z" />
                </svg>
                <input aria-label="調整値2" class="h-5 w-7 border border-[#a0a0a0] border-r-white border-b-white bg-black" />
                <svg class="h-5 w-[160px]" viewBox="0 0 160 20" fill="#f0f0f0" shape-rendering="crispEdges">
                  <path d="M15 14h2v1h-2zM22 6h1v2h-1zM41 9h1v1h-1zM44 8h2v1h-2zM47 8h2v1h-2zM44 11h2v1h-2zM47 11h2v1h-2zM83 8h2v2h-2zM83 11h2v3h-2zM95 8h4v3h-4zM100 8h4v3h-4zM111 8h1v1h-1zM151 7h1v9h-1zM150 9h1v1h-1zM150 12h1v2h-1zM153 8h2v1h-2zM155 7h1v4h-1zM153 11h3v1h-3zM154 13h2v1h-2zM153 15h2v1h-2z" />
                </svg>
              </div>
            </div>
          </fieldset>
        </div>

        <!-- counters -->
        <div class="mt-[13px] mr-[10px] flex h-[17px] items-center justify-end pr-[51px] whitespace-nowrap">
          <label for="races" class="w-[82px]">対象レース数:</label>
          <input id="races" value="467" readonly class="mr-1 h-[17px] w-10 border-t-2 border-l-2 border-[#808080] bg-white px-[3px] pb-[2px] text-right text-[11px]" />
          <label for="hits" class="w-[82px]">的中レース数:</label>
          <input id="hits" value="30" readonly class="mr-[14px] h-[17px] w-10 border-t-2 border-l-2 border-[#808080] bg-white px-[3px] pb-[2px] text-right text-[11px]" />
          <div class="relative flex items-center">
            <label for="rate" class="w-12">回収率:</label>
            <input id="rate" value="114.5%" readonly class="h-[17px] w-[51px] border-t-2 border-l-2 border-[#808080] bg-white px-[2px] pb-[2px] text-right text-[11px]" />
            <div class="pointer-events-none absolute -top-[11px] -right-[27px] -bottom-[15px] -left-[7px] z-10 border-5 border-[#ed1c24]"></div>
          </div>
        </div>

        <!-- results -->
        <div class="mt-[7px] mr-[10px] flex flex-1 border-2 border-[#696969] border-t-[#808080] border-r-white border-b-[#e3e3e3] bg-white">
          <div class="flex-1">
            <table class="w-full table-fixed border-separate border-spacing-0">
              <colgroup>
                <col class="w-[70px]" />
                <col class="w-10" />
                <col class="w-10" />
                <col />
                <col class="w-8" />
                <col class="w-20" />
                <col class="w-[72px]" />
                <col class="w-[58px]" />
                <col class="w-20" />
                <col class="w-[72px]" />
                <col class="w-[76px]" />
              </colgroup>
              <thead>
                <tr class="h-[21px] bg-[#f0f0f0] whitespace-nowrap *:border-r *:border-b *:border-black *:p-0 *:font-normal *:shadow-[inset_1px_1px_0_#fff,inset_-1px_-1px_0_#a0a0a0]">
                  <th>日付</th>
                  <th>場名</th>
                  <th>レース</th>
                  <th>買い目</th>
                  <th>的中</th>
                  <th>購入金額</th>
                  <th>配当金</th>
                  <th>点的中率</th>
                  <th>レース的中率</th>
                  <th>収支</th>
                  <th>累計</th>
                </tr>
              </thead>
              <tbody id="rows"></tbody>
            </table>
          </div>
          <div class="flex w-4 flex-col items-center bg-[#f0f0f0]">
            <svg class="mt-[7px] h-1 w-[7px]" viewBox="0 0 7 4"><path d="M0 4h7L3.500 0z" fill="#505050" /></svg>
            <div class="mt-[66px] flex w-[15px] flex-1 items-center justify-center border border-[#979797] bg-linear-to-r from-[#f5f5f5] from-50% to-[#cfcfd2]">
              <svg class="h-[9px] w-2" viewBox="0 0 8 9" shape-rendering="crispEdges"><path d="M0 0h7v1H0zM0 3h7v1H0zM0 6h7v1H0z" fill="#606060" /></svg>
            </div>
            <svg class="my-[7px] h-1 w-[7px]" viewBox="0 0 7 4"><path d="M0 0h7L3.500 4z" fill="#505050" /></svg>
          </div>
        </div>

        <!-- totals -->
        <div class="mt-[6px] mr-[104px] mb-3 flex h-[17px] items-center justify-end whitespace-nowrap">
          <label for="maxBalance" class="w-[57px]">最大収支：</label>
          <input id="maxBalance" value="1,188,000" readonly class="mr-[5px] h-[17px] w-[72px] border-t-2 border-l-2 border-[#808080] bg-white px-[2px] pb-[3px] text-right text-[11px]" />
          <label for="minBalance" class="w-[57px]">最小収支：</label>
          <input id="minBalance" value="−450,000" readonly class="mr-[5px] h-[17px] w-[72px] border-t-2 border-l-2 border-[#808080] bg-white px-[2px] pb-[3px] text-right text-[11px]" />
          <label for="maxTotal" class="w-[57px]">最大累計：</label>
          <input id="maxTotal" value="2,294,000" readonly class="mr-[5px] h-[17px] w-[72px] border-t-2 border-l-2 border-[#808080] bg-white px-[2px] pb-[3px] text-right text-[11px]" />
          <label for="minTotal" class="w-[57px]">最小累計：</label>
          <input id="minTotal" value="−320,000" readonly class="mr-[9px] h-[17px] w-[72px] border-t-2 border-l-2 border-[#808080] bg-white px-[2px] pb-[3px] text-right text-[11px]" />
          <input aria-label="購入金額計" value="8,220,000" readonly class="mr-px h-[17px] w-[79px] border-t-2 border-l-2 border-[#808080] bg-white px-[2px] pb-[3px] text-right text-[11px]" />
          <input aria-label="配当金計" value="9,414,000" readonly class="mr-px h-[17px] w-[71px] border-t-2 border-l-2 border-[#808080] bg-white px-[2px] pb-[3px] text-right text-[11px]" />
          <input aria-label="点的中率計" value="3.6%" readonly class="mr-px h-[17px] w-[57px] border-t-2 border-l-2 border-[#808080] bg-white px-[2px] pb-[3px] text-right text-[11px]" />
          <div class="relative flex gap-px">
            <input aria-label="レース的中率計" value="6.4%" readonly class="h-[17px] w-[79px] border-t-2 border-l-2 border-[#808080] bg-white px-[2px] pb-[3px] text-right text-[11px]" />
            <input aria-label="収支計" value="1,194,000" readonly class="h-[17px] w-[71px] border-t-2 border-l-2 border-[#808080] bg-white px-[2px] pb-[3px] text-right text-[11px]" />
            <div class="pointer-events-none absolute -top-[7px] -right-[35px] -bottom-2 -left-[4px] border-5 border-[#ed1c24]"></div>
          </div>
        </div>
      </main>

      <footer class="flex border border-l-0 border-[#a0a0a0] bg-[#f0f0f0] pt-2 pr-4 pb-[7px] pl-4 shadow-[inset_0_1px_0_#fff]">
        <button class="mr-[31px] h-[25px] w-[105px] border border-white border-r-[#696969] border-b-[#696969] shadow-[inset_-1px_-1px_0_#a0a0a0,inset_1px_1px_0_#e3e3e3]">シミュレーション</button>
        <button class="mr-[6px] h-[25px] w-[105px] border border-white border-r-[#696969] border-b-[#696969] shadow-[inset_-1px_-1px_0_#a0a0a0,inset_1px_1px_0_#e3e3e3]">条件ファイル保存</button>
        <button class="mr-[6px] h-[25px] w-[105px] border border-white border-r-[#696969] border-b-[#696969] shadow-[inset_-1px_-1px_0_#a0a0a0,inset_1px_1px_0_#e3e3e3]">条件ファイル読込</button>
        <button class="h-[25px] w-[105px] border border-white border-r-[#696969] border-b-[#696969] shadow-[inset_-1px_-1px_0_#a0a0a0,inset_1px_1px_0_#e3e3e3]">条件全クリア</button>
        <button class="ml-auto h-[25px] w-[105px] border border-white border-r-[#696969] border-b-[#696969] shadow-[inset_-1px_-1px_0_#a0a0a0,inset_1px_1px_0_#e3e3e3]">閉じる</button>
      </footer>

      <!-- status bar -->
      <div class="flex h-[19px] gap-[2px] bg-[#f0f0f0] pt-[2px]">
        <div class="w-[180px] border border-[#a0a0a0] border-r-white border-b-white"></div>
        <div class="flex-1 border border-[#a0a0a0] border-r-white border-b-white"></div>
      </div>
    </div>

    <script>
      // date, purchase, payout, point hit rate, race hit rate, balance, total
      const results = [
        ["2015/10/11", "350,000", "328,000", "2.8%", "5.5%", "−22,000", "−21,000"],
        ["2015/10/12", "290,000", "1,080,000", "10.3%", "16.6%", "790,000", "769,000"],
        ["2015/10/17", "440,000", "299,000", "4.5%", "7.6%", "−141,000", "628,000"],
        ["2015/10/18", "470,000", "1,272,000", "4.2%", "7.4%", "802,000", "1,430,000"],
        ["2015/10/24", "360,000", "486,000", "2.7%", "4.7%", "126,000", "1,556,000"],
        ["2015/10/25", "450,000", "0", "0.0%", "0.0%", "−450,000", "1,106,000"],
        ["2015/10/31", "450,000", "1,638,000", "6.6%", "10.3%", "1,188,000", "2,294,000"],
        ["2015/11/01", "660,000", "493,000", "4.5%", "10.3%", "−167,000", "2,127,000"],
        ["2015/11/07", "450,000", "0", "0.0%", "0.0%", "−450,000", "1,677,000"],
        ["2015/11/08", "390,000", "540,000", "5.1%", "8.3%", "150,000", "1,827,000"],
        ["2015/11/14", "60,000", "0", "0.0%", "0.0%", "−60,000", "1,767,000"],
        ["2015/11/15", "550,000", "738,000", "5.4%", "10.0%", "188,000", "1,955,000"],
        ["2015/11/21", "260,000", "0", "0.0%", "0.0%", "−260,000", "1,695,000"],
        ["2015/11/22", "380,000", "391,000", "5.2%", "9.5%", "11,000", "1,706,000"],
        ["2015/11/23", "310,000", "0", "0.0%", "0.0%", "−310,000", "1,396,000"],
        ["2015/11/28", "280,000", "113,000", "3.5%", "6.2%", "−167,000", "1,229,000"],
        ["2015/11/29", "350,000", "0", "0.0%", "0.0%", "−350,000", "879,000"],
        ["2015/12/05", "520,000", "170,000", "1.9%", "3.5%", "−350,000", "529,000"],
        ["2015/12/06", "340,000", "1,005,000", "5.8%", "8.0%", "665,000", "1,194,000"],
      ];

      const tbody = document.getElementById("rows");
      results.forEach(([date, ...values]) => {
        const tr = document.createElement("tr");
        tr.className =
          "h-[21px] text-[11px] *:border-r *:border-b *:border-[#c0c0c0] *:p-0 *:pr-px";
        [date, "", "", "", "", ...values].forEach((text, i) => {
          const td = document.createElement("td");
          td.innerText = text;
          td.className = i === 0 ? "text-center" : "text-right";
          tr.appendChild(td);
        });
        tbody.appendChild(tr);
      });
    </script>
  </body>
</html>
